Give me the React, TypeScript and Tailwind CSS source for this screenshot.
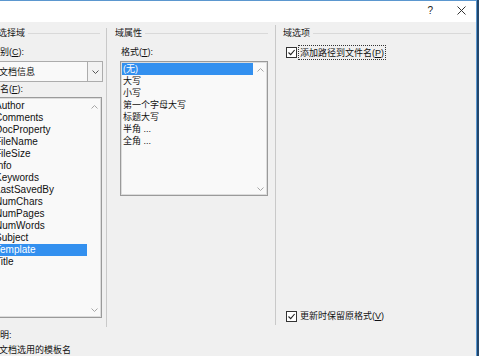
import React from "react";

const Chev = ({ up, color = "#a6a6a6" }: { up?: boolean; color?: string }) => (
  <svg width="7" height="4" viewBox="0 0 7 4" className="block">
    <path
      d={up ? "M0.5 3.5 L3.5 0.5 L6.5 3.5" : "M0.5 0.5 L3.5 3.5 L6.5 0.5"}
      fill="none"
      stroke={color}
      strokeWidth="1"
    />
  </svg>
);

const Check = () => (
  <div className="w-[11px] h-[11px] border border-[#333] bg-white flex items-center justify-center shrink-0">
    <svg width="9" height="9" viewBox="0 0 9 9" className="block">
      <path d="M1.5 4.5 L3.7 6.7 L7.6 2" fill="none" stroke="#222" strokeWidth="1.1" />
    </svg>
  </div>
);

const Header = ({ label, pl, ml, mr }: { label: string; pl?: string; ml?: string; mr: string }) => (
  <div className={`mt-[5px] h-[12px] flex items-center ${pl ?? ""}`}>
    <span className={`whitespace-nowrap leading-[12px] text-[9px] text-[#1a1a1a] ${ml ?? ""}`}>{label}</span>
    <div className={`flex-1 h-px bg-[#d9d9d9] ml-[3px] ${mr}`} />
  </div>
);

const U = ({ c }: { c: string }) => <span className="underline underline-offset-1">{c}</span>;

const leftItems = [
  "Author",
  "Comments",
  "DocProperty",
  "FileName",
  "FileSize",
  "Info",
  "Keywords",
  "LastSavedBy",
  "NumChars",
  "NumPages",
  "NumWords",
  "Subject",
  "Template",
  "Title",
];

const midItems = ["(无)", "大写", "小写", "第一个字母大写", "标题大写", "半角 ...", "全角 ..."];

export default function App() {
  return (
    <div
      className="w-[479px] h-[356px] overflow-hidden bg-[#22466b] text-[#111]"
      style={{ fontFamily: "'Liberation Sans', 'Noto Sans CJK SC', sans-serif" }}
    >
      <div className="w-[477px] h-[356px] flex flex-col bg-[#f0f0f0] border-t border-r border-[#5b97cf]">
        {/* title bar */}
        <div className="h-[21px] bg-white flex items-center justify-end shrink-0">
          <span className="text-[10px] leading-[10px] text-[#222] mr-[24px] mb-[2px]">?</span>
          <svg width="9" height="9" viewBox="0 0 9 9" className="block mr-[10px] mb-[2px]">
            <path d="M0.5 0.5 L8.5 8.5 M8.5 0.5 L0.5 8.5" stroke="#333" strokeWidth="1" />
          </svg>
        </div>

        {/* body */}
        <div className="flex-1 flex overflow-hidden">
          {/* left column */}
          <div className="w-[106px] shrink-0 flex flex-col">
            <Header label="请选择域" ml="-ml-[11px]" mr="mr-[6px]" />
            <div className="mt-[7px] h-[12px] leading-[12px] text-[9px] whitespace-nowrap -ml-[9px]">
              类别(<U c="C" />):
            </div>
            <div className="mt-[3px] h-[21px] -ml-[20px] w-[123px] border border-[#acacac] bg-[#f9f9f9] flex items-center">
              <span className="flex-1 pl-[18px] text-[9px] leading-[12px] whitespace-nowrap">文档信息</span>
              <div className="w-[15px] h-full border-l border-[#acacac] bg-[#f2f2f2] flex items-center justify-center">
                <Chev color="#555" />
              </div>
            </div>
            <div className="mt-[1px] h-[12px] leading-[12px] text-[9px] whitespace-nowrap -ml-[9px]">
              域名(<U c="F" />):
            </div>
            <div className="mt-[2px] h-[221px] -ml-[10px] w-[112px] border border-[#9a9a9a] bg-[#f9f9f9] shadow-[inset_0_0_0_1px_#dcdcdc] flex">
              <div className="flex-1 pt-[2px] pl-[1px] flex flex-col">
                {leftItems.map((t) => (
                  <div
                    key={t}
                    className={`h-[12px] leading-[12px] text-[10px] pl-[3px] whitespace-nowrap ${
                      t === "Template" ? "bg-[#3390ef] text-white" : "text-[#111]"
                    }`}
                  >
                    {t}
                  </div>
                ))}
              </div>
              <div className="w-[14px] flex flex-col items-center justify-between pt-[7px] pb-[5px]">
                <Chev up />
                <Chev />
              </div>
            </div>
            <div className="mt-[11px] h-[12px] leading-[12px] text-[9px] whitespace-nowrap -ml-[9px]">说明:</div>
            <div className="mt-[3px] h-[12px] leading-[12px] text-[9px] whitespace-nowrap -ml-[19px]">
              当前文档选用的模板名
            </div>
          </div>

          {/* separator */}
          <div className="w-px shrink-0 bg-[#c9c9c9] mt-[6px] mb-[29px]" />

          {/* middle column */}
          <div className="w-[168px] shrink-0 flex flex-col">
            <Header label="域属性" pl="pl-[8px]" mr="mr-[7px]" />
            <div className="mt-[7px] h-[12px] leading-[12px] text-[9px] whitespace-nowrap pl-[14px]">
              格式(<U c="T" />):
            </div>
            <div className="mt-[3px] ml-[13px] w-[148px] h-[135px] border border-[#9a9a9a] bg-[#f9f9f9] shadow-[inset_0_0_0_1px_#dcdcdc] flex">
              <div className="flex-1 pt-[1px] pl-[1px] flex flex-col">
                {midItems.map((t, i) => (
                  <div
                    key={t}
                    className={`h-[12px] leading-[12px] text-[9px] pl-[1px] whitespace-nowrap ${
                      i === 0 ? "bg-[#3390ef] text-white" : "text-[#111]"
                    }`}
                  >
                    {t}
                  </div>
                ))}
              </div>
              <div className="w-[14px] flex flex-col items-center justify-between pt-[6px] pb-[4px]">
                <Chev up />
                <Chev />
              </div>
            </div>
          </div>

          {/* separator */}
          <div className="w-px shrink-0 bg-[#c9c9c9] mt-[3px] mb-[31px]" />

          {/* right column */}
          <div className="flex-1 flex flex-col">
            <Header label="域选项" pl="pl-[7px]" mr="mr-[5px]" />
            <div className="mt-[6px] h-[15px] flex items-center pl-[10px]">
              <Check />
              <span className="ml-[1px] h-[15px] border border-dotted border-[#333] px-[1px] flex items-center text-[9px] leading-[12px] whitespace-nowrap">
                添加路径到文件名(<U c="P" />)
              </span>
            </div>
            <div className="mt-auto mb-[33px] h-[14px] flex items-center pl-[10px]">
              <Check />
              <span className="ml-[3px] text-[9px] leading-[12px] whitespace-nowrap">
                更新时保留原格式(<U c="V" />)
              </span>
            </div>
          </div>
        </div>
      </div>
    </div>
  );
}
